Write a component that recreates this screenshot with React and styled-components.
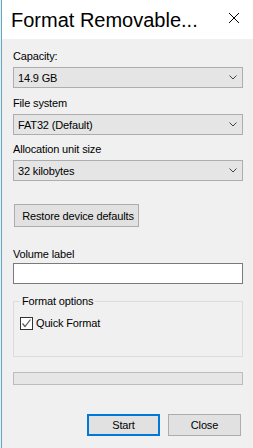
import React from 'react';
import styled, { createGlobalStyle } from 'styled-components';

const GlobalStyle = createGlobalStyle`
  html, body {
    margin: 0;
    padding: 0;
    background: #e9edef;
  }
  body {
    font-family: "Liberation Sans", Arial, sans-serif;
    font-size: 11px;
    color: #000;
  }
`;

const Window = styled.div`
  margin-left: 1px;
  width: 252px;
  height: 448px;
  box-sizing: border-box;
  border-left: 1px solid #62a7c6;
  background: #f0f0f0;
  display: flex;
  flex-direction: column;
`;

const TitleBar = styled.div`
  height: 39px;
  background: #fff;
  display: flex;
  align-items: center;
  justify-content: space-between;
  padding: 0 14px 0 9px;
`;

const Title = styled.div`
  font-size: 20px;
  line-height: 39px;
  padding-top: 1px;
  color: #000;
  white-space: nowrap;
`;

const CloseGlyph = styled.svg`
  width: 10px;
  height: 10px;
  margin-top: -3px;
`;

const Body = styled.div`
  display: flex;
  flex-direction: column;
  padding: 0 10px 0 11px;
`;

const Label = styled.div`
  line-height: 14px;
  letter-spacing: -0.15px;
  margin-top: ${p => p.$top}px;
  margin-bottom: ${p => p.$bottom ?? 4}px;
`;

const Select = styled.div`
  height: 21px;
  box-sizing: border-box;
  border: 1px solid #adadad;
  background: #e5e5e5;
  display: flex;
  align-items: center;
  justify-content: space-between;
  padding: 0 5px 0 4px;
  letter-spacing: -0.15px;
`;

const Chevron = styled.svg`
  width: 8px;
  height: 5px;
`;

const Button = styled.div`
  height: ${p => p.$height ?? 22}px;
  box-sizing: border-box;
  border: ${p => (p.$primary ? '2px solid #0078d7' : '1px solid #adadad')};
  background: #e1e1e1;
  display: flex;
  align-items: center;
  justify-content: center;
  width: ${p => p.$width}px;
  letter-spacing: -0.15px;
`;

const RestoreButton = styled(Button)`
  margin-top: 23px;
  margin-left: 1px;
  padding-left: 3px;
`;

const TextInput = styled.div`
  height: 21px;
  box-sizing: border-box;
  border: 1px solid #7a7a7a;
  background: #fff;
`;

const Group = styled.fieldset`
  margin: 10px 0 0;
  padding: 0 6px 26px;
  border: 1px solid #dcdcdc;
  min-inline-size: 0;
`;

const Legend = styled.legend`
  padding: 0 2px;
  line-height: 14px;
  letter-spacing: -0.15px;
`;

const CheckRow = styled.label`
  display: flex;
  align-items: center;
  gap: 3px;
  margin-top: 8px;
  line-height: 14px;
  letter-spacing: -0.15px;
`;

const Box = styled.span`
  width: 13px;
  height: 13px;
  box-sizing: border-box;
  border: 1px solid #333;
  background: #fff;
  display: flex;
  align-items: center;
  justify-content: center;
`;

const Progress = styled.div`
  margin-top: 15px;
  height: 13px;
  box-sizing: border-box;
  border: 1px solid #bcbcbc;
  background: #e6e6e6;
`;

const Actions = styled.div`
  margin-top: 29px;
  display: flex;
  justify-content: flex-end;
  gap: 8px;
  padding-right: 2px;
`;

const fields = [
  { label: 'Capacity:', value: '14.9 GB', top: 10 },
  { label: 'File system', value: 'FAT32 (Default)', top: 8 },
  { label: 'Allocation unit size', value: '32 kilobytes', top: 7 },
];

function Dropdown({ value }) {
  return (
    <Select>
      <span>{value}</span>
      <Chevron viewBox="0 0 8 5">
        <path d="M0.5 0.5 L4 4 L7.5 0.5" fill="none" stroke="#444" strokeWidth="1" />
      </Chevron>
    </Select>
  );
}

export default function App() {
  return (
    <>
      <GlobalStyle />
      <Window>
        <TitleBar>
          <Title>Format Removable...</Title>
          <CloseGlyph viewBox="0 0 10 10">
            <path d="M0 0 L10 10 M10 0 L0 10" stroke="#000" strokeWidth="1" />
          </CloseGlyph>
        </TitleBar>
        <Body>
          {fields.map(f => (
            <React.Fragment key={f.label}>
              <Label $top={f.top}>{f.label}</Label>
              <Dropdown value={f.value} />
            </React.Fragment>
          ))}
          <RestoreButton $width={125} $height={23}>Restore device defaults</RestoreButton>
          <Label $top={20} $bottom={2}>Volume label</Label>
          <TextInput />
          <Group>
            <Legend>Format options</Legend>
            <CheckRow>
              <Box>
                <svg width="11" height="11" viewBox="0 0 11 11">
                  <path d="M1.5 5.5 L4 8.5 L9.5 1.5" fill="none" stroke="#555" strokeWidth="1.2" />
                </svg>
              </Box>
              Quick Format
            </CheckRow>
          </Group>
          <Progress />
          <Actions>
            <Button $primary $width={73}>Start</Button>
            <Button $width={73}>Close</Button>
          </Actions>
        </Body>
      </Window>
    </>
  );
}
